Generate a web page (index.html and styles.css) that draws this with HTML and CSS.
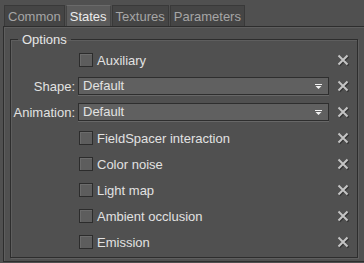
FILE: index.html
```html
<!DOCTYPE html>
<html lang="en">
<head>
    <meta charset="UTF-8">
    <meta name="viewport" content="width=device-width, initial-scale=1.0">
    <title>States</title>
    <link rel="stylesheet" href="styles.css">
</head>
<body>
    <div class="tabbar">
        <div class="tab">Common</div>
        <div class="tab active">States</div>
        <div class="tab">Textures</div>
        <div class="tab">Parameters</div>
    </div>

    <div class="pane">
        <fieldset class="group">
            <legend>Options</legend>
            <div class="grid">
                <span></span>
                <label class="check"><span class="box"></span>Auxiliary</label>
                <span class="clear"><svg viewBox="0 0 13 13" width="13" height="13"><path d="M2.5 2.5 L11.5 11.5 M11.5 2.5 L2.5 11.5" class="shadow"/><path d="M1.5 1.5 L10.5 10.5 M10.5 1.5 L1.5 10.5" class="cross"/></svg></span>

                <span class="label">Shape:</span>
                <div class="combo">Default<svg class="arrow" viewBox="0 0 7 5" width="7" height="5"><path d="M0 0 H7 V1 H0 Z M0.5 2 H6.5 L3.5 5 Z"/></svg></div>
                <span class="clear"><svg viewBox="0 0 13 13" width="13" height="13"><path d="M2.5 2.5 L11.5 11.5 M11.5 2.5 L2.5 11.5" class="shadow"/><path d="M1.5 1.5 L10.5 10.5 M10.5 1.5 L1.5 10.5" class="cross"/></svg></span>

                <span class="label">Animation:</span>
                <div class="combo">Default<svg class="arrow" viewBox="0 0 7 5" width="7" height="5"><path d="M0 0 H7 V1 H0 Z M0.5 2 H6.5 L3.5 5 Z"/></svg></div>
                <span class="clear"><svg viewBox="0 0 13 13" width="13" height="13"><path d="M2.5 2.5 L11.5 11.5 M11.5 2.5 L2.5 11.5" class="shadow"/><path d="M1.5 1.5 L10.5 10.5 M10.5 1.5 L1.5 10.5" class="cross"/></svg></span>

                <span></span>
                <label class="check"><span class="box"></span>FieldSpacer interaction</label>
                <span class="clear"><svg viewBox="0 0 13 13" width="13" height="13"><path d="M2.5 2.5 L11.5 11.5 M11.5 2.5 L2.5 11.5" class="shadow"/><path d="M1.5 1.5 L10.5 10.5 M10.5 1.5 L1.5 10.5" class="cross"/></svg></span>

                <span></span>
                <label class="check"><span class="box"></span>Color noise</label>
                <span class="clear"><svg viewBox="0 0 13 13" width="13" height="13"><path d="M2.5 2.5 L11.5 11.5 M11.5 2.5 L2.5 11.5" class="shadow"/><path d="M1.5 1.5 L10.5 10.5 M10.5 1.5 L1.5 10.5" class="cross"/></svg></span>

                <span></span>
                <label class="check"><span class="box"></span>Light map</label>
                <span class="clear"><svg viewBox="0 0 13 13" width="13" height="13"><path d="M2.5 2.5 L11.5 11.5 M11.5 2.5 L2.5 11.5" class="shadow"/><path d="M1.5 1.5 L10.5 10.5 M10.5 1.5 L1.5 10.5" class="cross"/></svg></span>

                <span></span>
                <label class="check"><span class="box"></span>Ambient occlusion</label>
                <span class="clear"><svg viewBox="0 0 13 13" width="13" height="13"><path d="M2.5 2.5 L11.5 11.5 M11.5 2.5 L2.5 11.5" class="shadow"/><path d="M1.5 1.5 L10.5 10.5 M10.5 1.5 L1.5 10.5" class="cross"/></svg></span>

                <span></span>
                <label class="check"><span class="box"></span>Emission</label>
                <span class="clear"><svg viewBox="0 0 13 13" width="13" height="13"><path d="M2.5 2.5 L11.5 11.5 M11.5 2.5 L2.5 11.5" class="shadow"/><path d="M1.5 1.5 L10.5 10.5 M10.5 1.5 L1.5 10.5" class="cross"/></svg></span>
            </div>
        </fieldset>
    </div>
</body>
</html>
```

FILE: styles.css
```css
body {
    font-family: "Liberation Sans", Arial, sans-serif;
    font-size: 13px;
    background-color: #505050;
    color: #e2e2e2;
    margin: 0;
    padding: 0;
    overflow: hidden;
}

.tabbar {
    display: flex;
    padding: 5px 0 0 4px;
    height: 21px;
}

.tab {
    height: 20px;
    line-height: 21px;
    padding: 0 3px;
    margin-right: 1px;
    background-color: #454545;
    border: 1px solid #393939;
    border-bottom: none;
    color: #a6a6a6;
}

.tab.active {
    background-color: #5b5b5b;
    border-color: #444;
    border-top-color: #6a6a6a;
    color: #ececec;
}

.pane {
    margin-left: 3px;
    width: 361px;
    height: 236px;
    border: 1px solid #2d2d2d;
    border-right: none;
    box-shadow: inset 1px 1px 0 #5e5e5e;
    box-sizing: border-box;
    padding: 5px 0 0 6px;
}

.group {
    width: 348px;
    height: 226px;
    box-sizing: border-box;
    margin: 0;
    padding: 0;
    border: 1px solid #2d2d2d;
    box-shadow: 1px 1px 0 #5e5e5e, inset 1px 1px 0 #5e5e5e;
}

.group legend {
    margin-left: 7px;
    padding: 0 4px;
    line-height: 15px;
    color: #e6e6e6;
}

.grid {
    display: grid;
    grid-template-columns: 64px 251px 25px;
    grid-auto-rows: 26px;
    column-gap: 3px;
    align-items: center;
    margin-top: 0;
}

.label {
    text-align: right;
    color: #e2e2e2;
}

.check {
    display: flex;
    align-items: center;
    margin-left: 1px;
}

.box {
    width: 12px;
    height: 12px;
    margin-right: 4px;
    border: 1px solid #2c2c2c;
    background-color: #5d5d5d;
    box-shadow: inset 1px 1px 0 #6b6b6b;
}

.combo {
    position: relative;
    height: 16px;
    line-height: 16px;
    padding-left: 4px;
    margin-top: -1px;
    background-color: #606060;
    border: 1px solid #2e2e2e;
    box-shadow: 0 1px 0 #676767;
}

.arrow {
    position: absolute;
    right: 6px;
    top: 6px;
    fill: #f0f0f0;
}

.clear {
    display: flex;
    align-items: center;
    padding-left: 5px;
}

.clear svg {
    flex: none;
}

.clear .shadow {
    stroke: #333;
    stroke-width: 2;
    fill: none;
}

.clear .cross {
    stroke: #c4c4c4;
    stroke-width: 2;
    fill: none;
}
```
